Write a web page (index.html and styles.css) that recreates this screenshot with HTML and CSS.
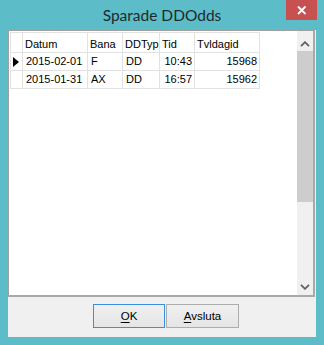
FILE: index.html
```html
<!DOCTYPE html>
<html lang="sv">
<head>
<meta charset="utf-8">
<title>Sparade DDOdds</title>
<link rel="stylesheet" href="styles.css">
</head>
<body>
<div class="window">
  <div class="titlebar">
    <span class="title">Sparade DDOdds</span>
    <div class="close">
      <svg width="10" height="10" viewBox="0 0 10 10"><path d="M1 1.5 L8.5 9 M8.5 1.5 L1 9" stroke="#fff" stroke-width="1.8" fill="none"/></svg>
    </div>
  </div>
  <div class="client">
    <div class="grid">
      <div class="rows">
        <div class="row head">
          <div class="cell rh"></div>
          <div class="cell">Datum</div>
          <div class="cell">Bana</div>
          <div class="cell">DDTyp</div>
          <div class="cell">Tid</div>
          <div class="cell">Tvldagid</div>
        </div>
        <div class="row">
          <div class="cell rh"><svg width="6" height="10" viewBox="0 0 6 10"><path d="M0 0 L6 5 L0 10 Z" fill="#000"/></svg></div>
          <div class="cell">2015-02-01</div>
          <div class="cell">F</div>
          <div class="cell">DD</div>
          <div class="cell num">10:43</div>
          <div class="cell num">15968</div>
        </div>
        <div class="row">
          <div class="cell rh"></div>
          <div class="cell">2015-01-31</div>
          <div class="cell">AX</div>
          <div class="cell">DD</div>
          <div class="cell num">16:57</div>
          <div class="cell num">15962</div>
        </div>
      </div>
      <div class="scrollbar">
        <div class="sb-btn up"><svg width="10" height="6" viewBox="0 0 10 6"><path d="M1 5.2 L5 1.2 L9 5.2" stroke="#606060" stroke-width="1.8" fill="none"/></svg></div>
        <div class="sb-thumb"></div>
        <div class="sb-track"></div>
        <div class="sb-btn down"><svg width="10" height="6" viewBox="0 0 10 6"><path d="M1 0.8 L5 4.8 L9 0.8" stroke="#606060" stroke-width="1.8" fill="none"/></svg></div>
      </div>
    </div>
    <div class="buttons">
      <button class="btn default"><u>O</u>K</button>
      <button class="btn wide"><u>A</u>vsluta</button>
    </div>
  </div>
</div>
</body>
</html>
```
FILE: styles.css
```css
* { box-sizing: border-box; }
html, body { margin: 0; padding: 0; }
body {
  width: 324px;
  height: 345px;
  overflow: hidden;
  background: #5cbcc8;
  font-family: "Liberation Sans", Arial, sans-serif;
}
.window {
  width: 324px;
  height: 345px;
  display: flex;
  flex-direction: column;
}
.titlebar {
  position: relative;
  height: 30px;
  flex: none;
  text-align: center;
}
.title {
  display: inline-block;
  font-family: Lato, "Liberation Sans", sans-serif;
  font-size: 15.5px;
  line-height: 18px;
  padding-top: 6px;
  color: #1f2a2c;
}
.close {
  position: absolute;
  top: 0;
  right: 7px;
  width: 31px;
  height: 20px;
  background: #c75050;
  display: flex;
  align-items: center;
  justify-content: center;
}
.close svg { display: block; }
.client {
  margin: 0 8px;
  width: 308px;
  height: 307px;
  background: #f0f0f0;
  display: flex;
  flex-direction: column;
}
.grid {
  width: 307px;
  height: 267px;
  flex: none;
  background: #fff;
  border-top: 1px solid #a0a0a0;
  border-left: 1px solid #a0a0a0;
  border-right: 2px solid #a9a9a9;
  border-bottom: 2px solid #a9a9a9;
  display: flex;
}
.rows {
  flex: 1;
  padding: 1px 0 0 1px;
}
.row {
  display: grid;
  grid-template-columns: 12px 65px 35px 37px 35px 65px;
  width: 250px;
  border-left: 1px solid #e2e2e2;
  height: 18px;
}
.row.head {
  height: 21px;
  border-top: 1px solid #e2e2e2;
}
.cell {
  border-right: 1px solid #e2e2e2;
  border-bottom: 1px solid #e2e2e2;
  font-size: 11px;
  color: #000;
  padding: 0 2px 0 3px;
  line-height: 17px;
  white-space: nowrap;
  overflow: hidden;
}
.head .cell {
  padding: 3px 2px 0 2px;
  line-height: 17px;
}
.cell.num { text-align: right; }
.cell.rh {
  padding: 0;
  display: flex;
  align-items: center;
  justify-content: flex-end;
  padding-right: 3px;
}
.cell.rh svg { display: block; }
.scrollbar {
  width: 16px;
  flex: none;
  display: flex;
  flex-direction: column;
  background: #f0f0f0;
}
.sb-btn {
  flex: none;
  display: flex;
  justify-content: center;
}
.sb-btn svg { display: block; }
.sb-btn.up { height: 20px; align-items: flex-start; padding-top: 10px; }
.sb-btn.down { height: 18px; align-items: flex-start; padding-top: 7px; }
.sb-thumb {
  height: 151px;
  flex: none;
  background: #cdcdcd;
}
.sb-track { flex: 1; }
.buttons {
  flex: 1;
  display: flex;
  gap: 1px;
  padding: 7px 0 0 85px;
}
.btn {
  height: 24px;
  width: 72px;
  margin: 0;
  padding: 0;
  font-family: "Liberation Sans", Arial, sans-serif;
  font-size: 11.5px;
  color: #000;
  background: linear-gradient(#f0f0f0, #e5e5e5);
  border: 1px solid #adadad;
  border-radius: 0;
}
.btn.default { border-color: #3c8fe0; }
.btn.wide { width: 73px; }
.btn u { text-decoration: underline; text-underline-offset: 2px; }
```
